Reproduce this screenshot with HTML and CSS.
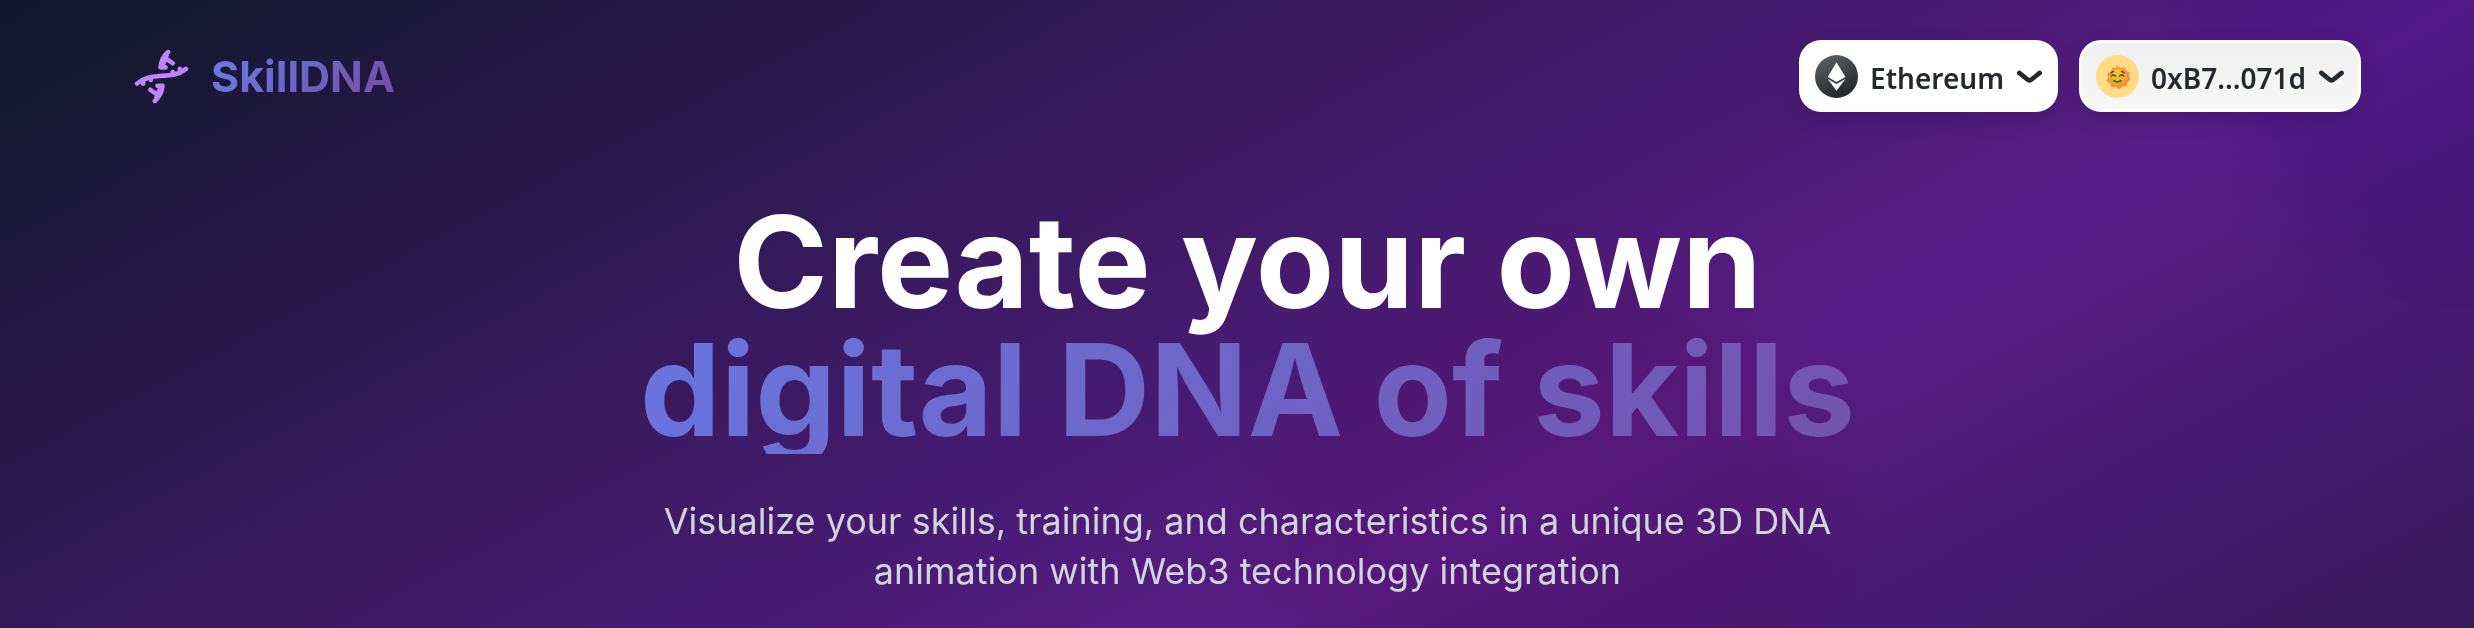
FILE: index.html
```html
<!DOCTYPE html>
<html lang="en">
<head>
<meta charset="utf-8">
<meta name="viewport" content="width=device-width, initial-scale=1">
<title>SkillDNA</title>
<link rel="stylesheet" href="styles.css">
</head>
<body>
<div class="page">
  <div class="glow glow-corner"></div>
  <div class="glow glow-pink"></div>
  <header class="header">
    <a class="brand" href="#">
      <svg class="brand-icon" viewBox="0 0 54 54" aria-hidden="true">
        <g fill="none" stroke="#c084fc" stroke-width="4.5" stroke-linecap="round" stroke-linejoin="round">
          <path d="M3 34C10 28 17 27 25 26.500C35 26 43 26 51 19.500"/>
          <path d="M9 34V32M16.500 30.500V29M38 24V22.500M45 21.500V19.500"/>
          <path d="M33.500 3C29 7 26.500 12 26 18L31 18M31 9L38 14M32 6L29 14"/>
          <path d="M20.500 51C25 47 27.500 42 28 36H23M23 45L16 40M22 48L25 40"/>
        </g>
      </svg>
      <span class="brand-name">SkillDNA</span>
    </a>
    <div class="wallet">
      <button class="pill" type="button">
        <svg class="pill-icon" viewBox="0 0 28 28" aria-hidden="true">
          <defs><linearGradient id="eth" x1="0" y1="0" x2="14" y2="28" gradientUnits="userSpaceOnUse"><stop stop-color="#62656a"/><stop offset="1" stop-color="#25292e"/></linearGradient></defs>
          <circle cx="14" cy="14" r="14" fill="url(#eth)"/>
          <path d="M8.300 14.400L14 17.600L19.800 14.400L14 4.700Z" fill="#fff"/>
          <path d="M14 18.900L8.300 15.700L14 23.300L19.800 15.700Z" fill="#fff"/>
        </svg>
        <span class="pill-label">Ethereum</span>
        <svg class="chevron" viewBox="0 0 14 7" aria-hidden="true"><path d="M12.750 1.540L8.516 5.004C7.780 5.607 6.720 5.607 5.984 5.004L1.750 1.540"/></svg>
      </button>
      <button class="pill pill-account" type="button">
        <svg class="pill-icon" viewBox="0 0 42 42" aria-hidden="true">
          <defs><radialGradient id="sun" cx=".5" cy=".3" r=".75"><stop stop-color="#f2cc35"/><stop offset="1" stop-color="#e89a22"/></radialGradient></defs>
          <circle cx="21" cy="21" r="21" fill="#ffdb83"/>
          <path fill="#f58b45" d="M21 10.500l3 2.500 3.800-1 1.500 3.600 3.600 1.600-.800 3.800 1.400 3-2.900 2.500-.800 4-4 .3-3.300 2.700-3.300-2.300-4 .3-1.500-3.600-3.300-2.400 1.500-3.500-1-3.800 3.500-1.700 1.300-3.800 3.900.3z"/>
          <circle cx="21" cy="22" r="9" fill="url(#sun)"/>
          <path d="M15 20.500q2-2 4 0M23 20.500q2-2 4 0M17.500 25q3.500 2.500 7 0M14.500 17.500l2.500-1.500M27.500 17.500l-2.500-1.500" fill="none" stroke="#4d4438" stroke-width="1.400" stroke-linecap="round"/>
        </svg>
        <span class="pill-label">0xB7...071d</span>
        <svg class="chevron" viewBox="0 0 14 7" aria-hidden="true"><path d="M12.750 1.540L8.516 5.004C7.780 5.607 6.720 5.607 5.984 5.004L1.750 1.540"/></svg>
      </button>
    </div>
  </header>
  <main class="hero">
    <h1 class="hero-title">Create your own <span class="hero-accent">digital DNA of skills</span></h1>
    <p class="hero-text">Visualize your skills, training, and characteristics in a unique 3D DNA animation with Web3 technology integration</p>
  </main>
</div>
</body>
</html>
```
FILE: styles.css
```css
* { box-sizing: border-box; }

body {
  margin: 0;
  font-family: Inter, "Liberation Sans", sans-serif;
  background: #0f172a;
}

.page {
  position: relative;
  min-height: 100vh;
  padding: 40px 113px 32px 134px;
  overflow: hidden;
  background: linear-gradient(to bottom right, #0f172a, #581c87, #0f172a) 0 0 / 100% 1300px;
}

.glow {
  position: absolute;
  width: 570px;
  height: 570px;
  border-radius: 50%;
  mix-blend-mode: multiply;
  filter: blur(42px);
  opacity: 0.2;
}

.glow-corner {
  top: -285px;
  right: -285px;
  background: #8b5cf6;
}

.glow-pink {
  top: 250px;
  left: 51%;
  background: #ec4899;
}

.header {
  position: relative;
  display: flex;
  align-items: center;
  justify-content: space-between;
}

.brand {
  display: flex;
  align-items: center;
  gap: 22px;
  text-decoration: none;
}

.brand-icon {
  width: 55px;
  height: 55px;
}

.brand-name {
  font-size: 43px;
  font-weight: 700;
  line-height: 56px;
  color: transparent;
  background: linear-gradient(135deg, #667eea, #764ba2);
  background-clip: text;
  -webkit-background-clip: text;
}

.wallet {
  display: flex;
  gap: 21px;
}

.pill {
  display: flex;
  align-items: center;
  gap: 12px;
  height: 72px;
  padding: 0 16px;
  border: 0;
  border-radius: 22px;
  color: #25292e;
  background: #fff;
  box-shadow: 0 7px 21px rgba(0, 0, 0, 0.1);
  font: 600 28px/36px "Noto Sans", "Open Sans", sans-serif;
}

.pill-account {
  padding: 0 14px;
  border: 3px solid #fff;
  background: linear-gradient(#f0f0f0, #f7f7f7);
}

.pill-icon {
  width: 43px;
  height: 43px;
}

.pill-label {
  padding-top: 4px;
}

.chevron {
  width: 26px;
  height: 13px;
  fill: none;
  stroke: currentColor;
  stroke-width: 2.5;
  stroke-linecap: round;
  stroke-linejoin: round;
  overflow: visible;
}

.hero {
  position: relative;
  max-width: 1792px;
  margin: 86px auto 0;
  text-align: center;
}

.hero-title {
  margin: 0;
  font-size: 128px;
  font-weight: 700;
  line-height: 128px;
  color: #fff;
}

.hero-accent {
  display: block;
  color: transparent;
  background: linear-gradient(135deg, #667eea, #764ba2);
  background-clip: text;
  -webkit-background-clip: text;
}

.hero-text {
  max-width: 1200px;
  margin: 42px auto 0;
  font-size: 36px;
  line-height: 50px;
  color: #d1d5db;
}
```
